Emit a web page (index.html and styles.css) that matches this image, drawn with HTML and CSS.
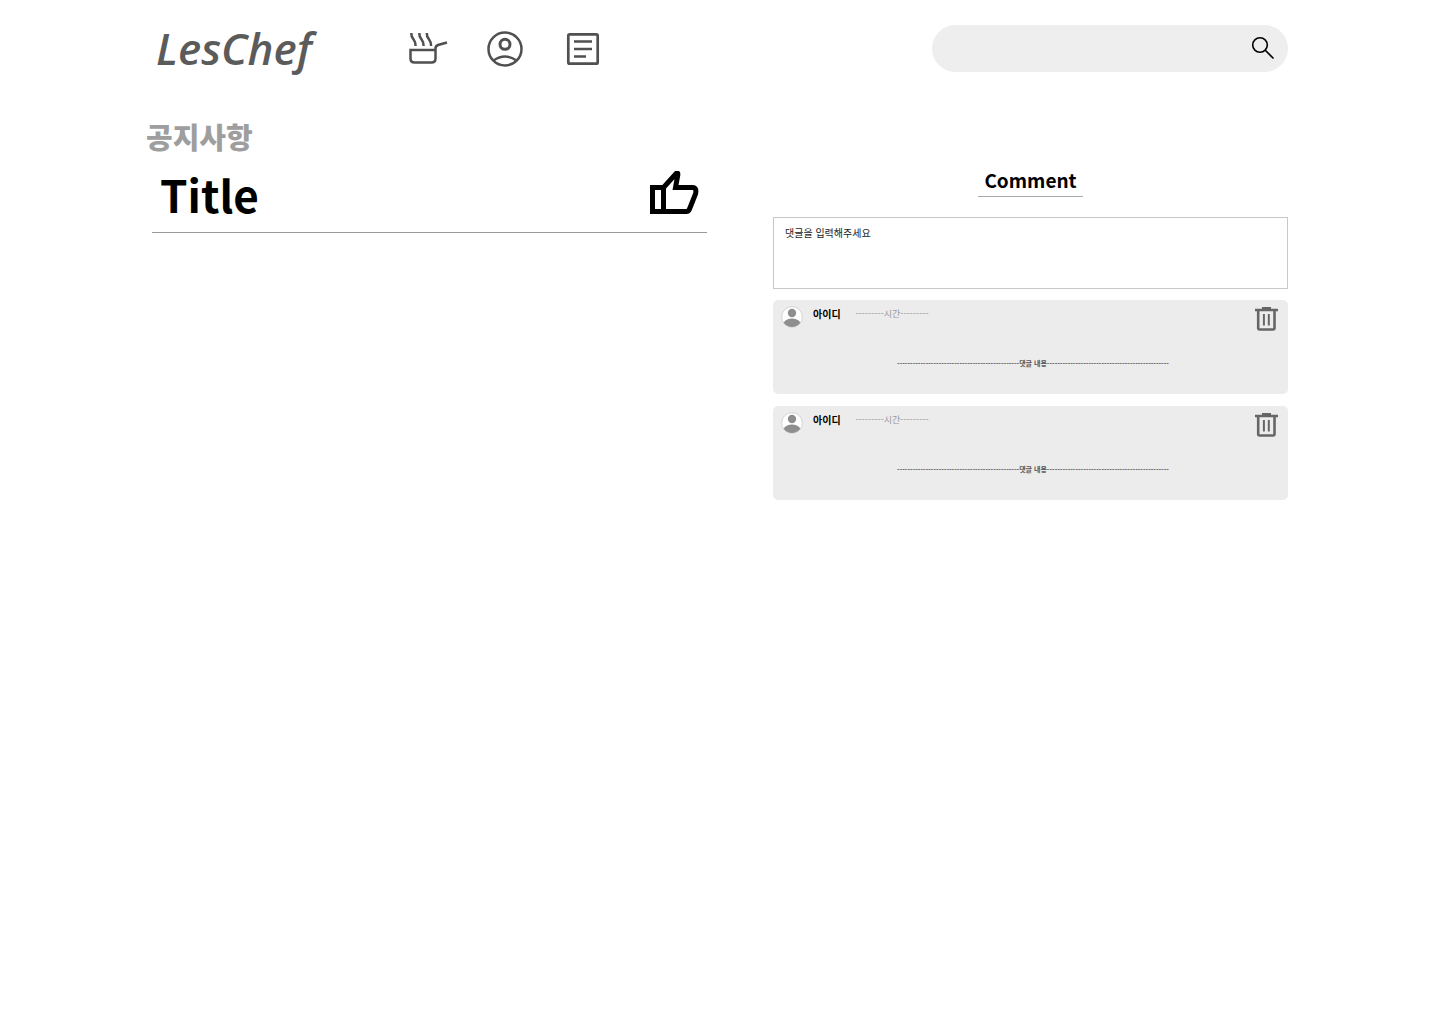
FILE: index.html
```html
<!DOCTYPE html>
<html lang="ko">
<head>
<meta charset="utf-8">
<meta name="viewport" content="width=device-width, initial-scale=1">
<title>LesChef</title>
<link rel="stylesheet" href="styles.css">
</head>
<body>
<svg class="sprite" aria-hidden="true">
  <symbol id="avatar" viewBox="0 0 22 22">
    <circle cx="11" cy="11" r="10.3" fill="#fff" stroke="#b5b5b5" stroke-width=".5"/>
    <circle cx="11" cy="7" r="4.2" fill="#8e8e8e"/>
    <path d="M2.600 16.400C6 11.200 16 11.200 19.400 16.400A10 10 0 0 1 2.600 16.400z" fill="#8e8e8e"/>
  </symbol>
  <symbol id="trash" viewBox="0 0 24 24">
    <path d="M1 3.500h23M8 1.700h9" fill="none" stroke="#666" stroke-width="2.400"/>
    <path d="M4.200 4v17.500q0 1.500 1.500 1.500h13.300q1.500 0 1.500-1.500V4" fill="none" stroke="#666" stroke-width="2.600"/>
    <path d="M9.900 7.500v11.500M14.800 7.500v11.500" stroke="#666" stroke-width="2"/>
  </symbol>
</svg>
<header class="header">
  <a class="logo" href="#">LesChef</a>
  <nav class="nav">
    <a href="#" aria-label="레시피">
      <svg width="40" height="40" viewBox="0 0 40 40" fill="none" stroke="#505050" stroke-width="2.500">
        <path d="M2.500 22h25v8.500q0 4-4 4h-17q-4 0-4-4zM27.500 22v-1.500q0-2.500 2.500-3.500l9-2.500"/>
        <path d="M3.300 5c-.3 3 .8 4.500 2.300 6.500s2.200 3.500 2 6.500M11.300 5c-.3 3 .8 4.500 2.300 6.500s2.200 3.500 2 6.500M18.800 5c-.3 3 .8 4.500 2.300 6.500s2.200 3.500 2 6.500"/>
      </svg>
    </a>
    <a href="#" aria-label="마이페이지">
      <svg width="40" height="40" viewBox="0 0 40 40" fill="none" stroke="#505050" stroke-width="2.500">
        <circle cx="19" cy="21" r="16.500"/><circle cx="19" cy="16.300" r="5" stroke-width="3"/>
        <path d="M7.500 32.500q11.500-8 23 0"/>
      </svg>
    </a>
    <a href="#" aria-label="게시판">
      <svg width="40" height="40" viewBox="0 0 40 40" fill="none" stroke="#505050" stroke-width="2.700">
        <rect x="4.300" y="6.300" width="29.400" height="29.400" rx="1.500"/>
        <path d="M10 13.500h18M10 21h18M10 28.500h12" stroke-width="2.500"/>
      </svg>
    </a>
  </nav>
  <form class="search">
    <input class="search-input" type="search" aria-label="검색">
    <button class="icon-button" type="button" aria-label="검색하기">
      <svg width="24" height="24" viewBox="0 0 24 24" fill="none" stroke="#000" stroke-width="1.600"><circle cx="9" cy="9" r="7.300"/><path d="M14 14l8.500 8.500"/></svg>
    </button>
  </form>
</header>
<main class="main">
  <article class="post">
    <p class="category">공지사항</p>
    <div class="post-head">
      <h1 class="title">Title</h1>
      <button class="icon-button" type="button" aria-label="좋아요">
        <svg width="50" height="46" viewBox="0 0 50 46" fill="none" stroke="#000" stroke-width="5">
          <path d="M3.500 16.500h11v24h-11zM14.500 40.500h23q2 0 3-2.500l6-15q1.500-6.500-3-6.500h-17l2.300-12.500q.3-2-1-2.200l-13.300 14.700z"/>
        </svg>
      </button>
    </div>
  </article>
  <section class="comments">
    <h2 class="comments-title">Comment</h2>
    <textarea class="comment-input" aria-label="댓글" placeholder="댓글을 입력해주세요"></textarea>
    <ul class="comment-list">
      <li class="comment">
        <div class="comment-head">
          <svg width="22" height="22"><use href="#avatar"/></svg>
          <strong class="user">아이디</strong>
          <span class="time">---------시간---------</span>
          <button class="icon-button delete" type="button" aria-label="삭제"><svg width="24" height="25"><use href="#trash"/></svg></button>
        </div>
        <p class="comment-text">-----------------------------------------------댓글 내용-----------------------------------------------</p>
      </li>
      <li class="comment">
        <div class="comment-head">
          <svg width="22" height="22"><use href="#avatar"/></svg>
          <strong class="user">아이디</strong>
          <span class="time">---------시간---------</span>
          <button class="icon-button delete" type="button" aria-label="삭제"><svg width="24" height="25"><use href="#trash"/></svg></button>
        </div>
        <p class="comment-text">-----------------------------------------------댓글 내용-----------------------------------------------</p>
      </li>
    </ul>
  </section>
</main>
</body>
</html>
```
FILE: styles.css
```css
* { box-sizing: border-box; }
body {
  margin: 0;
  padding: 0 152px;
  background: #fff;
  color: #000;
  font-family: "Noto Sans CJK KR", sans-serif;
}
h1, h2, p, ul { margin: 0; padding: 0; }
.sprite { display: none; }
svg { display: block; }
.icon-button { display: block; padding: 0; border: 0; background: none; cursor: pointer; }

.header { display: flex; align-items: center; height: 96px; }
.logo {
  width: 256px;
  padding-left: 4px;
  color: #5b5b5b;
  font: italic 600 44px/56px "Open Sans", sans-serif;
  text-decoration: none;
}
.nav { display: flex; gap: 38px; }
.search {
  display: flex;
  align-items: center;
  width: 356px;
  height: 47px;
  margin-left: auto;
  padding: 0 13px 0 20px;
  border-radius: 24px;
  background: #eee;
}
.search-input { flex: 1; min-width: 0; border: 0; outline: 0; background: none; font-size: 16px; }

.main { display: grid; grid-template-columns: 555fr 515fr; gap: 66px; }
.post { padding-top: 18px; }
.category { margin-left: -6px; color: #9e9e9e; font-size: 29px; font-weight: 900; line-height: 44px; }
.post-head {
  display: flex;
  align-items: center;
  justify-content: space-between;
  height: 75px;
  padding: 0 8px 2px;
  border-bottom: 1px solid #999;
}
.title { font: 700 44px/64px "Noto Sans CJK KR", sans-serif; }

.comments { padding-top: 68px; }
.comments-title {
  width: 105px;
  margin: 0 auto 20px;
  border-bottom: 1px solid #aaa;
  font-size: 19px;
  line-height: 32px;
  text-align: center;
}
.comment-input {
  display: block;
  width: 100%;
  height: 72px;
  padding: 7px 11px;
  border: 1px solid #c8c8c8;
  border-radius: 0;
  font: 10px/15px "Noto Sans CJK KR", sans-serif;
  resize: none;
}
.comment-input::placeholder { color: #222; }
.comment-list { display: grid; gap: 12px; margin-top: 11px; list-style: none; }
.comment { min-height: 94px; padding: 6px 10px 0 8px; border-radius: 5px; background: #ececec; }
.comment-head { display: flex; align-items: flex-start; height: 49px; }
.user { margin-left: 10px; font-size: 10px; line-height: 15px; }
.time { margin-left: 15px; color: #999; font-size: 9px; line-height: 16px; }
.delete { margin-left: auto; }
.comment-text { padding-left: 7px; color: #555; font-size: 7px; font-weight: 700; line-height: 16px; text-align: center; }
```
